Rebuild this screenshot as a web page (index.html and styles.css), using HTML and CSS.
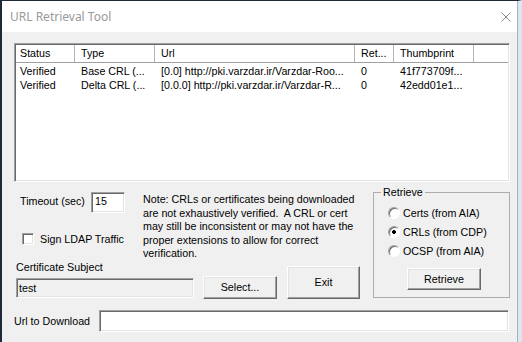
FILE: index.html
```html
<!DOCTYPE html>
<html>
<head>
    <title>URL Retrieval Tool</title>
    <link rel="stylesheet" href="styles.css">
</head>
<body>
    <div class="window">
        <div class="titlebar">
            <span class="title">URL Retrieval Tool</span>
            <svg class="close" width="10" height="10" viewBox="0 0 10 10">
                <path d="M0.5 0.5 L9.5 9.5 M9.5 0.5 L0.5 9.5" stroke="#8c8c8c" stroke-width="1" fill="none"/>
            </svg>
        </div>
        <div class="client">
            <div class="listview">
                <div class="lv-row lv-head">
                    <div class="lv-cell first">Status</div>
                    <div class="lv-cell">Type</div>
                    <div class="lv-cell">Url</div>
                    <div class="lv-cell">Ret...</div>
                    <div class="lv-cell">Thumbprint</div>
                    <div class="lv-cell filler"></div>
                </div>
                <div class="lv-body">
                    <div class="lv-row">
                        <div class="lv-cell first">Verified</div>
                        <div class="lv-cell">Base CRL (...</div>
                        <div class="lv-cell">[0.0] http://pki.varzdar.ir/Varzdar-Roo...</div>
                        <div class="lv-cell">0</div>
                        <div class="lv-cell">41f773709f...</div>
                        <div class="lv-cell filler"></div>
                    </div>
                    <div class="lv-row">
                        <div class="lv-cell first">Verified</div>
                        <div class="lv-cell">Delta CRL (...</div>
                        <div class="lv-cell">[0.0.0] http://pki.varzdar.ir/Varzdar-R...</div>
                        <div class="lv-cell">0</div>
                        <div class="lv-cell">42edd01e1...</div>
                        <div class="lv-cell filler"></div>
                    </div>
                </div>
            </div>

            <div class="middle">
                <div class="left-area">
                    <div class="top-row">
                        <div class="controls">
                            <div class="timeout">
                                <span>Timeout (sec)</span>
                                <div class="edit timeout-box">15</div>
                            </div>
                            <div class="check">
                                <span class="check-box"></span>
                                <span>Sign LDAP Traffic</span>
                            </div>
                        </div>
                        <p class="note">Note: CRLs or certificates being downloaded<br>are not exhaustively verified.&nbsp; A CRL or cert<br>may still be inconsistent or may not have the<br>proper extensions to allow for correct<br>verification.</p>
                    </div>
                    <div class="bottom-row">
                        <div class="subject">
                            <div class="subject-label">Certificate Subject</div>
                            <div class="edit readonly subject-box">test</div>
                        </div>
                        <div class="btn select-btn">Select...</div>
                        <div class="btn exit-btn">Exit</div>
                    </div>
                </div>

                <fieldset class="group">
                    <legend>Retrieve</legend>
                    <div class="radio-row"><span class="radio"></span>Certs (from AIA)</div>
                    <div class="radio-row"><span class="radio checked"></span>CRLs (from CDP)</div>
                    <div class="radio-row"><span class="radio"></span>OCSP (from AIA)</div>
                    <div class="btn retrieve-btn">Retrieve</div>
                </fieldset>
            </div>

            <div class="url-row">
                <span class="url-label">Url to Download</span>
                <div class="edit url-box"></div>
            </div>
        </div>
    </div>
</body>
</html>
```

FILE: styles.css
```css
body { margin: 0; font-family: "Liberation Sans", Arial, sans-serif; font-size: 10.7px; color: #000; background: #f0f0f0; }

.window {
    width: 522px;
    height: 342px;
    box-sizing: border-box;
    border-left: 2px solid #1e2a38;
    border-top: 1px solid #1e2a38;
    border-right: 4px solid #dfe6ee;
    padding-right: 1px;
    background: #f0f0f0;
    box-shadow: inset -1px 0 0 #9fb3c8;
    overflow: hidden;
}

.titlebar {
    height: 31px;
    background: #fff;
    display: flex;
    align-items: center;
    justify-content: space-between;
    padding: 0 6px 0 8px;
}
.title { font-family: "Noto Sans", sans-serif; font-size: 12px; color: #9a9a9a; }
.close { display: block; }

.client { padding: 11px 0 0 12px; }

/* sunken edges */
.listview, .edit, .check-box {
    border: 1px solid;
    border-color: #a0a0a0 #fff #fff #a0a0a0;
    box-shadow: inset 1px 1px 0 #696969, inset -1px -1px 0 #e3e3e3;
    background: #fff;
    box-sizing: border-box;
}

.listview { width: 496px; height: 139px; padding: 1px; }
.lv-row { display: grid; grid-template-columns: 59px 80px 200px 39px 80px 1fr; height: 14px; line-height: 14px; }
.lv-head { height: 17px; line-height: 17px; border-bottom: 1px solid #a0a0a0; }
.lv-head .lv-cell { border-right: 1px solid #b4b4b4; }
.lv-head .lv-cell.filler { border-right: none; }
.lv-cell { padding-left: 6px; white-space: nowrap; overflow: hidden; }
.lv-cell.first { padding-left: 4px; }
.lv-body { padding-top: 1px; }

.middle { display: flex; margin-top: 4px; }

.left-area {
    width: 346px;
    height: 112px;
    margin-right: 13px;
    display: flex;
    flex-direction: column;
    justify-content: space-between;
}

.top-row { display: flex; }
.controls { width: 105px; padding: 6px 0 0 6px; white-space: nowrap; }
.timeout { display: flex; align-items: flex-start; justify-content: space-between; }
.timeout span { padding-top: 3px; }
.timeout-box { width: 34px; height: 21px; padding: 2px 0 0 3px; }

.check { display: flex; align-items: center; margin-top: 19px; height: 13px; }
.check-box { width: 12px; height: 12px; margin: 0 6px 0 2px; flex: none; }

.note { margin: 7px 0 0 18px; line-height: 13.5px; white-space: nowrap; }

.bottom-row { display: flex; align-items: flex-end; }
.subject { width: 178px; margin: 0 0 1px 2px; }
.subject-label { line-height: 13px; }
.subject-box { height: 20px; margin-top: 4px; padding: 0 2px; line-height: 18px; }
.edit.readonly { background: #f0f0f0; }

.btn {
    background: #f0f0f0;
    border: 1px solid;
    border-color: #fff #696969 #696969 #fff;
    box-shadow: inset -1px -1px 0 #a0a0a0, inset 1px 1px 0 #e3e3e3;
    box-sizing: border-box;
    display: flex;
    align-items: center;
    justify-content: center;
}
.select-btn { width: 74px; height: 23px; margin-left: 9px; }
.exit-btn { width: 73px; height: 33px; margin-left: 10px; }

.group {
    width: 137px;
    box-sizing: border-box;
    margin: 0;
    padding: 0 7px 7px 7px;
    border: 1px solid #adadad;
    min-width: 0;
}
.group legend { padding: 0 2px; line-height: 13px; }
.radio-row { display: flex; align-items: center; height: 13px; margin: 6px 0 0 7px; white-space: nowrap; }
.radio-row:first-of-type { margin-top: 7px; }
.radio {
    width: 12px;
    height: 12px;
    box-sizing: border-box;
    border-radius: 50%;
    border: 1px solid;
    border-color: #a0a0a0 #fff #fff #a0a0a0;
    box-shadow: inset 1px 1px 0 #696969;
    background: #fff;
    margin-right: 3px;
    flex: none;
}
.radio.checked { background: radial-gradient(circle, #000 0 1.6px, #fff 2.2px); }
.retrieve-btn { width: 74px; height: 22px; margin: 11px 0 0 26px; }

.url-row { display: flex; align-items: center; margin-top: 12px; }
.url-label { width: 85px; }
.url-box { width: 410px; height: 22px; }
```
